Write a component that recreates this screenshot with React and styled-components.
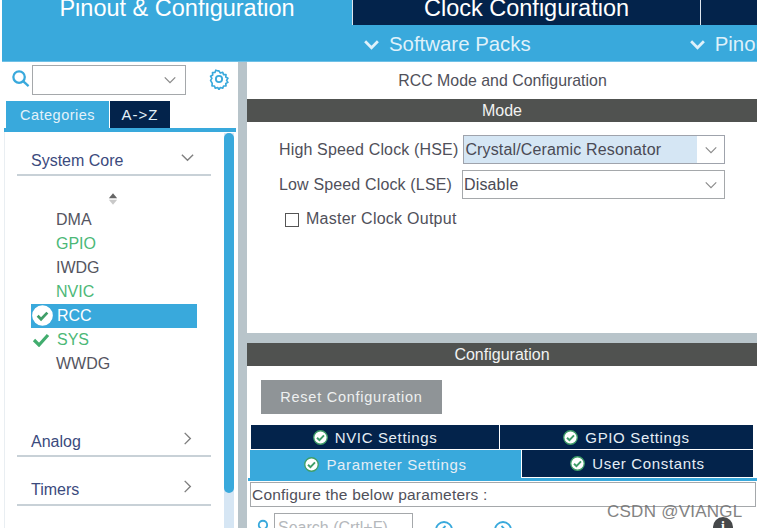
import React from 'react';
import styled, { createGlobalStyle } from 'styled-components';

const Global = createGlobalStyle`
  html, body { margin: 0; padding: 0; background: #fff; }
  body { font-family: "Liberation Sans", Arial, sans-serif; }
`;
const BLUE = '#39a9dc';
const NAVY = '#03234b';

const Page = styled.div`
  position: relative; width: 757px; height: 528px; overflow: hidden; background: #fff;
  display: flex; flex-direction: column;
`;
const Header = styled.header`
  height: 61px; margin-left: 2px; background: ${BLUE}; flex: none;
  display: flex; flex-direction: column; border-bottom: 1px solid #6fc0e6;
`;
const TopTabs = styled.div`display: flex; height: 25px; flex: none;`;
const TopTab = styled.div`
  width: ${p => p.$w}px; flex: ${p => p.$grow ? 1 : 'none'}; box-sizing: border-box;
  background: ${p => p.$active ? BLUE : NAVY};
  border-left: ${p => p.$active ? 0 : '1px solid #dfe6ee'};
  color: #fff; font-size: 23.5px; line-height: 17px; text-align: center; overflow: hidden; white-space: nowrap;
`;
const SubBar = styled.div`flex: 1; display: flex; align-items: center; padding-left: 361px; gap: 158px; color: #dff1fa; font-size: 20.4px;`;
const SubItem = styled.div`display: flex; align-items: center; gap: 9px; white-space: nowrap; margin-top: 3px;`;

const Body = styled.div`flex: 1; display: flex; min-height: 0;`;
const Left = styled.aside`width: 237px; flex: none; display: flex; flex-direction: column;`;
const SearchRow = styled.div`display: flex; align-items: center; height: 30px; padding: 3px 0 0 11px; flex: none;`;
const SearchGlyph = styled.span`display: flex; margin-top: -3px;`;
const Combo = styled.div`
  width: 154px; height: 30px; margin-left: 2px; box-sizing: border-box; border: 1.5px solid #a5a8ab; display: flex;
  align-items: center; justify-content: flex-end; padding-right: 8px;
`;
const GearWrap = styled.div`margin: -3px 0 0 22px; display: flex;`;
const CatTabs = styled.div`display: flex; height: 27px; margin: 6px 0 0 6px; gap: 1px; flex: none;`;
const CatTab = styled.div`
  width: ${p => p.$w}px; display: flex; align-items: center; justify-content: center;
  background: ${p => p.$active ? BLUE : NAVY}; color: #e3f2fa;
  font-size: ${p => p.$active ? 14.5 : 15}px; letter-spacing: ${p => p.$active ? 0.5 : 1}px;
`;
const CatRule = styled.div`height: 4px; margin: 0 1px 0 4px; background: ${BLUE}; flex: none;`;
const ListArea = styled.div`flex: 1; display: flex; min-height: 0; margin-left: 4px; border-left: 1px solid #e9eef2;`;
const ListInner = styled.div`flex: 1; padding: 0 13px 0 12px; min-width: 0;`;
const Category = styled.div`
  height: ${p => p.$h}px; margin-top: ${p => p.$mt || 0}px; box-sizing: border-box; border-bottom: 2px solid #c8d1d7;
  display: flex; justify-content: space-between; align-items: flex-end; padding: 0 16px ${p => p.$pb}px 14px;
  color: #3b4a7d; font-size: 16px; line-height: 20px;
`;
const CatChevron = styled.span`display: flex; margin-bottom: 6px;`;
const Sorter = styled.div`height: 18px; display: flex; justify-content: center; margin-top: 15px; padding-right: 2px;`;
const Items = styled.div`display: flex; flex-direction: column; margin-top: -1px;`;
const Item = styled.div`
  position: relative; height: 24px; margin: 0 14px 0 14px; padding-left: ${p => p.$sel || p.$tick ? 26 : 25}px; display: flex; align-items: center; font-size: 16px;
  background: ${p => p.$sel ? BLUE : 'transparent'};
  color: ${p => p.$sel ? '#fff' : p.$on ? '#4cb877' : '#55555f'};
`;
const ItemIcon = styled.span`position: absolute; left: 1px; top: ${p => p.$top}px; display: flex;`;
const Track = styled.div`width: 10px; margin-top: 1px; margin-right: 3px; background: #d6e6f4; flex: none;`;
const Thumb = styled.div`height: 360px; background: ${BLUE}; border-radius: 5px;`;
const Divider = styled.div`width: 9px; margin-left: 1px; flex: none; background: #b8c4ca;`;

const Right = styled.main`flex: 1; min-width: 0; display: flex; flex-direction: column;`;
const Title = styled.div`height: 37px; line-height: 38px; text-align: center; color: #50505a; font-size: 15.9px; flex: none; padding-left: 1px;`;
const DarkBar = styled.div`height: 23px; line-height: 23px; flex: none; background: #505250; color: #f2f2f2; text-align: center; font-size: 16px;`;
const ModeBody = styled.div`height: 211px; flex: none; padding: 13px 0 0 32px; box-sizing: border-box; display: flex; flex-direction: column;`;
const FieldRow = styled.div`display: flex; align-items: center; height: 29px; margin-bottom: 6px; color: #50505a; font-size: 16px; white-space: nowrap; letter-spacing: 0.15px;`;
const Select = styled.div`
  margin-left: ${p => p.$ml}px; width: ${p => p.$w}px; height: 29px; box-sizing: border-box; display: flex; align-items: center;
  border: 1px solid ${p => p.$focus ? '#9fa3ac' : '#a5a8ab'}; background: #fff; color: #4a4a55; position: relative;
`;
const SelectText = styled.div`
  align-self: stretch; display: flex; align-items: center; padding-left: 1px; flex: 1;
  background: ${p => p.$focus ? '#d5e6f4' : 'transparent'}; margin-right: ${p => p.$focus ? '27px' : 0};
`;
const Caret = styled.span`position: absolute; right: 6px; top: 7px; display: flex;`;
const CheckRow = styled.div`display: flex; align-items: center; gap: 7px; margin: 0 0 0 6px; height: 27px; color: #50505a; font-size: 16px; letter-spacing: 0.25px;`;
const Box = styled.span`width: 14px; height: 14px; border: 1px solid #555; box-sizing: border-box; background: #fff; margin-top: 2px;`;
const GreyBand = styled.div`height: 10px; flex: none; background: #b8c4ca;`;
const ConfBody = styled.div`flex: 1; display: flex; flex-direction: column; min-height: 0;`;
const ResetBtn = styled.div`
  width: 181px; height: 34px; margin: 14px 0 11px 14px; flex: none; background: #8f9497; color: #eef0f0; font-size: 14.5px; letter-spacing: 0.75px;
  display: flex; align-items: center; justify-content: center;
`;
const TabGrid = styled.div`display: grid; grid-template-columns: ${p => p.$cols}; margin: 0 4px 0 ${p => p.$ml}px; height: ${p => p.$h}px; gap: 1px; flex: none; padding-bottom: ${p => p.$pb}px;`;
const CfgTab = styled.div`
  display: flex; align-items: center; justify-content: center; gap: 7px; color: #e6eef5; font-size: 15px; letter-spacing: 0.65px;
  background: ${p => p.$active ? BLUE : NAVY}; margin-bottom: ${p => p.$active ? -1 : 0}px;
`;
const CfgRule = styled.div`height: 3px; margin: 0 -1px 0 1px; background: ${BLUE}; flex: none;`;
const ParamBox = styled.div`
  height: 25px; flex: none; margin: 1px 1px 0 3px; box-sizing: border-box; border: 1px solid #a5a8ab; color: #50505a; font-size: 15.5px;
  display: flex; align-items: center; padding-left: 1px; letter-spacing: 0.2px; white-space: nowrap;
`;
const SearchLine = styled.div`display: flex; align-items: flex-start; height: 30px; padding: 6px 0 0 10px; flex: none;`;
const SmallSearch = styled.span`display: flex; margin-top: 6px;`;
const SmallInput = styled.div`
  width: 139px; height: 26px; margin-left: 3px; box-sizing: border-box; border: 1px solid #a5a8ab; color: #b5b8bc; font-size: 16px; padding: 5px 3px 0; white-space: nowrap; overflow: hidden;
`;
const RoundIcons = styled.div`display: flex; gap: 39px; margin: 7px 0 0 21px;`;
const Info = styled.div`
  position: absolute; left: 713px; top: 517px; width: 20px; height: 20px; border-radius: 50%; background: #46484a; color: #fff;
  font: bold 14px "Liberation Serif", serif; text-align: center; line-height: 20px;
`;
const Watermark = styled.div`
  position: absolute; left: 607px; top: 502px; color: #6e6e6e; font-size: 17px; letter-spacing: 0.25px; white-space: nowrap; opacity: .85;
`;

const Chevron = ({ size = 16, color = '#dff1fa', w = 2.6, dir = 'down' }) => (
  <svg width={size} height={size} viewBox="0 0 16 16" fill="none" stroke={color} strokeWidth={w} style={dir === 'right' ? { transform: 'rotate(-90deg)' } : undefined}>
    <path d="M2 5l6 6 6-6" />
  </svg>
);
const Search = ({ size = 20, w = 2.4 }) => (
  <svg width={size} height={size} viewBox="0 0 20 20" fill="none" stroke={BLUE} strokeWidth={w}>
    <circle cx="8.5" cy="8.5" r="6" /><path d="M13 13l5.5 5" />
  </svg>
);
const Gear = () => (
  <svg width="22" height="22" viewBox="0 0 24 24" fill="none" stroke={BLUE} strokeWidth="2">
    <circle cx="12" cy="12" r="3.4" />
    <path d="M12 2.2l1.6 2.6 2.9-.9 1 2.8 3-.1-.3 3 2.6 1.5-1.6 2.5 1.6 2.5-2.6 1.3.3 3-3 .1-1 2.7-2.9-.9-1.6 2.5-1.6-2.5-2.9.9-1-2.7-3-.1.3-3L1.800 13.700l1.600-2.500-1.600-2.500 2.600-1.500-.3-3 3-.1 1-2.800 2.900.9z" strokeLinejoin="round" transform="translate(1.200 1.200) scale(.9)" />
  </svg>
);
const CheckBadge = ({ size = 15, ring = '#3f9e68', fill = '#fff' }) => (
  <svg width={size} height={size} viewBox="0 0 16 16">
    <circle cx="8" cy="8" r="7.200" fill={fill} stroke={ring} strokeWidth="1.400" />
    <path d="M4.300 8.200l2.600 2.600 4.800-5" fill="none" stroke="#3f9e68" strokeWidth="2.100" />
  </svg>
);
const Tick = () => (
  <svg width="18" height="14" viewBox="0 0 18 14" fill="none" stroke="#42ad6e" strokeWidth="3.200"><path d="M2 7l5 5 9-10" /></svg>
);
const SortIcon = () => (
  <svg width="10" height="16" viewBox="0 0 12 16"><path d="M6 1l5 6H1z" fill="#666" /><path d="M1 9h10l-5 6z" fill="#c9c9c9" /></svg>
);
const RoundArrow = ({ d }) => (
  <svg width="20" height="20" viewBox="0 0 20 20" fill="none" stroke={BLUE} strokeWidth="1.800"><circle cx="10" cy="10" r="8" /><path d={d} /></svg>
);
const Fold = ({ dir }) => (
  <CatChevron><Chevron size={15} color="#808080" w={1.500} dir={dir} /></CatChevron>
);

const items = [
  { n: 'DMA' }, { n: 'GPIO', on: 1 }, { n: 'IWDG' }, { n: 'NVIC', on: 1 },
  { n: 'RCC', sel: 1 }, { n: 'SYS', on: 1, tick: 1 }, { n: 'WWDG' },
];

export default function App() {
  return (
    <Page>
      <Global />
      <Header>
        <TopTabs>
          <TopTab $active $w={350}>Pinout &amp; Configuration</TopTab>
          <TopTab $w={348}>Clock Configuration</TopTab>
          <TopTab $grow />
        </TopTabs>
        <SubBar>
          <SubItem><Chevron size={17} />Software Packs</SubItem>
          <SubItem><Chevron size={17} />Pinout</SubItem>
        </SubBar>
      </Header>
      <Body>
        <Left>
          <SearchRow>
            <SearchGlyph><Search size={19} /></SearchGlyph>
            <Combo><Chevron size={14} color="#8a8a8a" w={1.500} /></Combo>
            <GearWrap><Gear /></GearWrap>
          </SearchRow>
          <CatTabs>
            <CatTab $active $w={103}>Categories</CatTab>
            <CatTab $w={60}>A-&gt;Z</CatTab>
          </CatTabs>
          <CatRule />
          <ListArea>
            <ListInner>
              <Category $h={44} $pb={3}>System Core<Fold /></Category>
              <Sorter><SortIcon /></Sorter>
              <Items>
                {items.map(it => (
                  <Item key={it.n} $sel={it.sel} $tick={it.tick} $on={it.on}>
                    {it.sel && <ItemIcon $top={1}><CheckBadge size={21} ring="#fff" /></ItemIcon>}
                    {it.tick && <ItemIcon $top={5}><Tick /></ItemIcon>}
                    {it.n}
                  </Item>
                ))}
              </Items>
              <Category $h={35} $mt={46} $pb={3}>Analog<Fold dir="right" /></Category>
              <Category $h={49} $pb={4}>Timers<Fold dir="right" /></Category>
            </ListInner>
            <Track><Thumb /></Track>
          </ListArea>
        </Left>
        <Divider />
        <Right>
          <Title>RCC Mode and Configuration</Title>
          <DarkBar>Mode</DarkBar>
          <ModeBody>
            <FieldRow>High Speed Clock (HSE)
              <Select $ml={5} $w={262} $focus>
                <SelectText $focus>Crystal/Ceramic Resonator</SelectText>
                <Caret><Chevron size={14} color="#8a8a8a" w={1.300} /></Caret>
              </Select>
            </FieldRow>
            <FieldRow>Low Speed Clock (LSE)
              <Select $ml={10} $w={263}>
                <SelectText>Disable</SelectText>
                <Caret><Chevron size={14} color="#8a8a8a" w={1.300} /></Caret>
              </Select>
            </FieldRow>
            <CheckRow><Box />Master Clock Output</CheckRow>
          </ModeBody>
          <GreyBand />
          <DarkBar>Configuration</DarkBar>
          <ConfBody>
            <ResetBtn>Reset Configuration</ResetBtn>
            <TabGrid $cols="248px 1fr" $ml={4} $h={24} $pb={1}>
              <CfgTab><CheckBadge />NVIC Settings</CfgTab>
              <CfgTab><CheckBadge />GPIO Settings</CfgTab>
            </TabGrid>
            <TabGrid $cols="271px 1fr" $ml={3} $h={27} $pb={1}>
              <CfgTab $active><CheckBadge />Parameter Settings</CfgTab>
              <CfgTab><CheckBadge />User Constants</CfgTab>
            </TabGrid>
            <CfgRule />
            <ParamBox>Configure the below parameters :</ParamBox>
            <SearchLine>
              <SmallSearch><Search size={14} w={2.6} /></SmallSearch>
              <SmallInput>Search (Crtl+F)</SmallInput>
              <RoundIcons>
                <RoundArrow d="M11.500 6l-4 4 4 4" />
                <RoundArrow d="M8.500 6l4 4-4 4" />
              </RoundIcons>
            </SearchLine>
          </ConfBody>
        </Right>
      </Body>
      <Info>i</Info>
      <Watermark>CSDN @VIANGL</Watermark>
    </Page>
  );
}
